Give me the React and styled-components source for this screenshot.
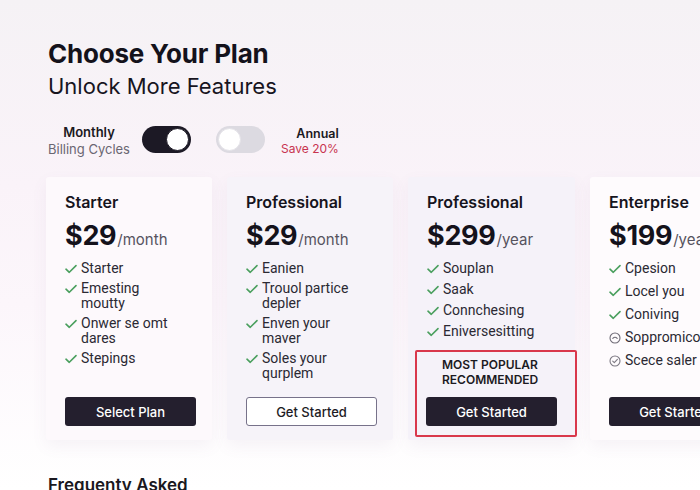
import React from 'react';
import styled, { createGlobalStyle } from 'styled-components';

const GlobalStyle = createGlobalStyle`
  html, body {
    margin: 0;
    padding: 0;
  }
  body {
    width: 700px;
    height: 490px;
    overflow: hidden;
    font-family: Inter, "Noto Sans", "Liberation Sans", sans-serif;
    background: linear-gradient(180deg, #f5f2f5 0%, #faf3f9 38%, #fcf6fb 62%, #ffffff 100%);
    color: #15131d;
  }
`;

const Page = styled.div`
  padding: 38px 0 0 48px;
  height: 490px;
  box-sizing: border-box;
  overflow: hidden;
`;

const Title = styled.h1`
  margin: 0;
  font-size: 26px;
  line-height: 31px;
  font-weight: 700;
  letter-spacing: -0.2px;
  color: #14121b;
`;

const Subtitle = styled.h2`
  margin: 4px 0 0;
  font-size: 22px;
  line-height: 27px;
  font-weight: 400;
  color: #17151e;
`;

const BillingRow = styled.div`
  display: flex;
  align-items: center;
  margin-top: 25px;
  height: 28px;
`;

const Label = styled.div`
  display: flex;
  flex-direction: column;
  align-items: ${(p) => (p.$align === 'right' ? 'flex-end' : 'center')};
  font-size: 13px;
  line-height: ${(p) => p.$lh || 16}px;
  padding-top: ${(p) => p.$pt || 0}px;
  margin-right: ${(p) => p.$mr || 0}px;
  margin-left: ${(p) => p.$ml || 0}px;
`;

const LabelMain = styled.span`
  font-weight: 600;
  color: #1b1922;
  font-size: ${(p) => p.$size || 13}px;
`;

const LabelSub = styled.span`
  color: ${(p) => (p.$accent ? '#c8344f' : '#6a6672')};
  font-size: ${(p) => p.$size || 13}px;
`;

const Toggle = styled.div`
  width: 49px;
  height: 27px;
  border-radius: 14px;
  box-sizing: border-box;
  padding: 2px;
  display: flex;
  justify-content: ${(p) => (p.$on ? 'flex-end' : 'flex-start')};
  background: ${(p) => (p.$on ? '#1c1925' : '#dcdae1')};
  margin-right: ${(p) => p.$mr || 0}px;
`;

const Knob = styled.div`
  width: 23px;
  height: 23px;
  border-radius: 50%;
  background: #fff;
  box-sizing: border-box;
  border: 1.5px solid ${(p) => (p.$on ? '#1c1925' : '#e4e2e8')};
`;

const Cards = styled.div`
  display: flex;
  gap: 15px;
  margin: 24px 0 0 -2px;
`;

const Card = styled.div`
  flex: 0 0 166px;
  height: 263px;
  box-sizing: border-box;
  padding: 15px 16px 14px 19px;
  display: flex;
  flex-direction: column;
  background: ${(p) => p.$bg};
  border-radius: 3px;
  box-shadow: 0 6px 16px rgba(130, 100, 140, 0.07);
`;

const PlanName = styled.div`
  font-size: 16px;
  line-height: 20px;
  font-weight: 600;
  color: #16141d;
`;

const PriceRow = styled.div`
  display: flex;
  align-items: baseline;
  margin-top: 7px;
  white-space: nowrap;
`;

const Amount = styled.span`
  font-size: 27px;
  line-height: 33px;
  font-weight: 700;
  letter-spacing: -0.3px;
  color: #14121b;
`;

const Period = styled.span`
  font-size: 15px;
  color: #56535e;
  margin-left: 1px;
`;

const Features = styled.ul`
  list-style: none;
  margin: 9px 0 0;
  padding: 0;
  display: flex;
  flex-direction: column;
  gap: ${(p) => p.$gap || 5}px;
`;

const Feature = styled.li`
  display: flex;
  align-items: flex-start;
  font-family: Roboto, Inter, sans-serif;
  font-size: 14px;
  line-height: 15px;
  color: #2b2933;
  white-space: nowrap;
`;

const IconBox = styled.span`
  flex: 0 0 16px;
  height: 15px;
  display: flex;
  align-items: center;
`;

const Button = styled.button`
  margin-top: auto;
  width: 131px;
  height: 29px;
  flex-shrink: 0;
  border-radius: 3px;
  font-family: inherit;
  font-size: 13px;
  font-weight: 500;
  cursor: pointer;
  box-sizing: border-box;
  background: ${(p) => (p.$outline ? '#ffffff' : '#241f2e')};
  color: ${(p) => (p.$outline ? '#1d1b24' : '#ffffff')};
  border: ${(p) => (p.$outline ? '1px solid #77728a' : 'none')};
  white-space: nowrap;
  overflow: hidden;
`;

const PopularBox = styled.div`
  margin: auto -18px -11px -12px;
  padding: 5px 18px 9px 9px;
  border: 2px solid #d9384c;
  border-radius: 2px;
  display: flex;
  flex-direction: column;
`;

const PopularText = styled.div`
  font-size: 12px;
  line-height: 15px;
  font-weight: 600;
  color: #1c1a22;
  padding-left: 16px;
  margin-bottom: 10px;
`;

const Faq = styled.div`
  margin-top: 35px;
  font-size: 17px;
  font-weight: 600;
  color: #1a1820;
`;

const Check = () => (
  <svg width="12" height="10" viewBox="0 0 12 10" fill="none">
    <path d="M1 5.2 L4.3 8.3 L11 1.6" stroke="#4a9f5e" strokeWidth="1.6" strokeLinecap="round" strokeLinejoin="round" />
  </svg>
);

const FaceIcon = () => (
  <svg width="12" height="12" viewBox="0 0 12 12" fill="none">
    <circle cx="6" cy="6" r="5" stroke="#6f6b76" strokeWidth="1.1" />
    <path d="M3.8 6.4 Q6 4 8.2 6.4" stroke="#6f6b76" strokeWidth="1.1" strokeLinecap="round" />
  </svg>
);

const CircleCheck = () => (
  <svg width="12" height="12" viewBox="0 0 12 12" fill="none">
    <circle cx="6" cy="6" r="5" stroke="#7c7882" strokeWidth="1.1" />
    <path d="M3.7 6.1 L5.3 7.7 L8.4 4.4" stroke="#7c7882" strokeWidth="1.1" strokeLinecap="round" strokeLinejoin="round" />
  </svg>
);

const icons = { check: <Check />, face: <FaceIcon />, circle: <CircleCheck /> };

const plans = [
  {
    name: 'Starter',
    amount: '$29',
    period: '/month',
    bg: '#fdf9fc',
    features: [['Starter'], ['Emesting', 'moutty'], ['Onwer se omt', 'dares'], ['Stepings']],
    button: 'Select Plan',
  },
  {
    name: 'Professional',
    amount: '$29',
    period: '/month',
    bg: '#f6f3f9',
    features: [['Eanien'], ['Trouol partice', 'depler'], ['Enven your', 'maver'], ['Soles your', 'qurplem']],
    button: 'Get Started',
    outline: true,
  },
  {
    name: 'Professional',
    amount: '$299',
    period: '/year',
    bg: '#f5f2f9',
    features: [['Souplan'], ['Saak'], ['Connchesing'], ['Eniversesitting']],
    button: 'Get Started',
    popular: true,
    gap: 6,
  },
  {
    name: 'Enterprise',
    amount: '$199',
    period: '/year',
    bg: '#fefbfd',
    features: [['Cpesion'], ['Locel you'], ['Coniving'], ['Soppromico'], ['Scece saler']],
    icons: ['check', 'check', 'check', 'face', 'circle'],
    button: 'Get Started',
    gap: 8,
  },
];

const PlanCard = ({ plan }) => (
  <Card $bg={plan.bg}>
    <PlanName>{plan.name}</PlanName>
    <PriceRow>
      <Amount>{plan.amount}</Amount>
      <Period>{plan.period}</Period>
    </PriceRow>
    <Features $gap={plan.gap}>
      {plan.features.map((lines, i) => (
        <Feature key={i}>
          <IconBox>{icons[plan.icons ? plan.icons[i] : 'check']}</IconBox>
          <span>
            {lines.map((l, j) => (
              <div key={j}>{l}</div>
            ))}
          </span>
        </Feature>
      ))}
    </Features>
    {plan.popular ? (
      <PopularBox>
        <PopularText>
          MOST POPULAR
          <br />
          RECOMMENDED
        </PopularText>
        <Button>{plan.button}</Button>
      </PopularBox>
    ) : (
      <Button $outline={plan.outline}>{plan.button}</Button>
    )}
  </Card>
);

export default function App() {
  return (
    <>
      <GlobalStyle />
      <Page>
        <Title>Choose Your Plan</Title>
        <Subtitle>Unlock More Features</Subtitle>
        <BillingRow>
          <Label $mr={12} $lh={17} $pt={4}>
            <LabelMain>Monthly</LabelMain>
            <LabelSub>Billing Cycles</LabelSub>
          </Label>
          <Toggle $on $mr={25}>
            <Knob $on />
          </Toggle>
          <Toggle>
            <Knob />
          </Toggle>
          <Label $align="right" $ml={16} $lh={15} $pt={4}>
            <LabelMain $size={12.5}>Annual</LabelMain>
            <LabelSub $accent $size={12}>Save 20%</LabelSub>
          </Label>
        </BillingRow>
        <Cards>
          {plans.map((p, i) => (
            <PlanCard key={i} plan={p} />
          ))}
        </Cards>
        <Faq>Frequenty Asked</Faq>
      </Page>
    </>
  );
}
